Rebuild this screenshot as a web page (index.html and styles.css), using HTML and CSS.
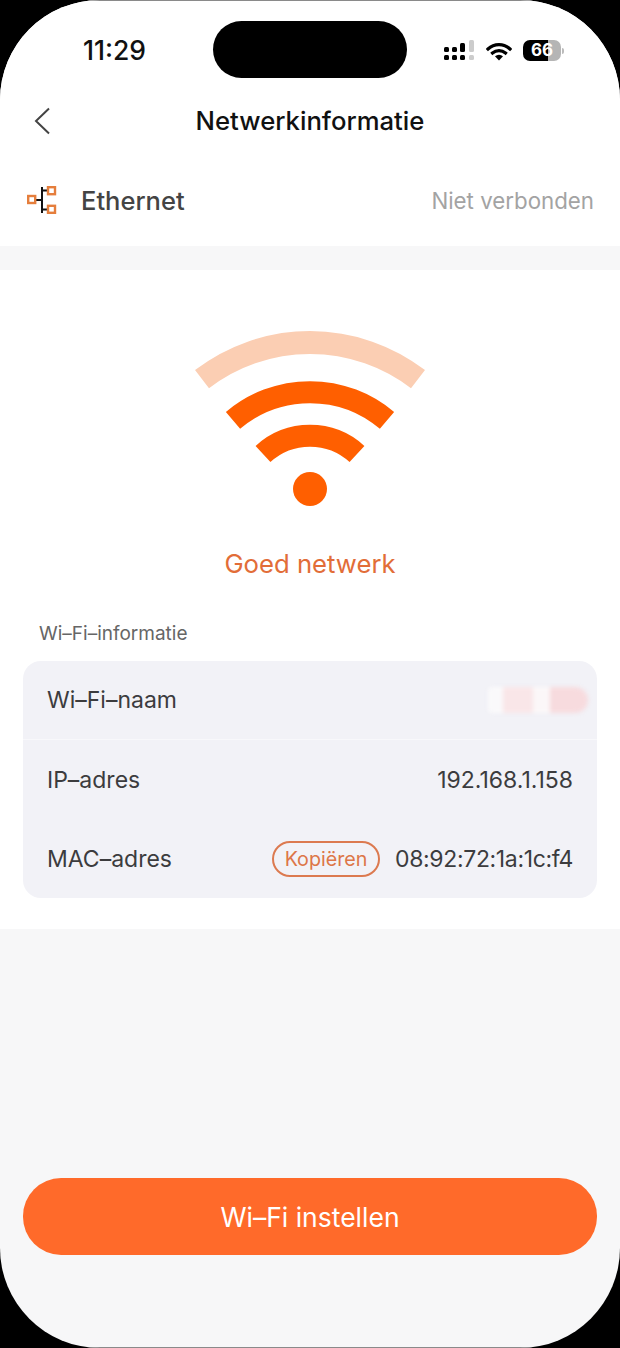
FILE: index.html
```html
<!DOCTYPE html>
<html lang="nl">
<head>
<meta charset="UTF-8">
<meta name="viewport" content="width=device-width, initial-scale=1.0">
<title>Netwerkinformatie</title>
<link rel="stylesheet" href="styles.css">
</head>
<body>
<div class="phone">
    <div class="top">
        <div class="status-bar">
            <div class="time">11:29</div>
            <div class="island"></div>
            <div class="status-icons">
                <svg class="signal" width="30" height="21" viewBox="0 0 30 21">
                    <rect x="0" y="7" width="5" height="5" rx="1.5" fill="#000"/>
                    <rect x="0" y="15" width="5" height="5" rx="1.5" fill="#000"/>
                    <rect x="8" y="7" width="5" height="5" rx="1.5" fill="#000"/>
                    <rect x="8" y="15" width="5" height="5" rx="1.5" fill="#000"/>
                    <rect x="16" y="3" width="5" height="9" rx="1.5" fill="#000"/>
                    <rect x="16" y="15" width="5" height="5" rx="1.5" fill="#000"/>
                    <rect x="25" y="0" width="5" height="12" rx="1.5" fill="#ccc"/>
                    <rect x="25" y="15" width="5" height="5" rx="1.5" fill="#ccc"/>
                </svg>
                <svg class="wifi-small" width="26" height="19" viewBox="0 0 26 19">
                    <path d="M2 7 A16 16 0 0 1 24 7" fill="none" stroke="#000" stroke-width="3.2" stroke-linecap="square"/>
                    <path d="M6.5 11 A10 10 0 0 1 19.5 11" fill="none" stroke="#000" stroke-width="3.2" stroke-linecap="square"/>
                    <path d="M9 14.2 A6 6 0 0 1 17 14.2 L13 18.6 Z" fill="#000"/>
                </svg>
                <div class="battery">
                    <div class="battery-body">66</div>
                    <div class="battery-nub"></div>
                </div>
            </div>
        </div>
        <div class="nav">
            <svg class="back" width="16" height="28" viewBox="0 0 16 28">
                <path d="M15 1.500 L2 14 L15 26.500" fill="none" stroke="#444" stroke-width="2"/>
            </svg>
            <div class="nav-title">Netwerkinformatie</div>
        </div>
    </div>

    <div class="ethernet">
        <svg class="ethernet-icon" width="30" height="28" viewBox="0 0 30 28">
            <path d="M8 14 H15 M15 1 V27 M15 4.500 H21 M15 23.500 H21" fill="none" stroke="#111" stroke-width="2"/>
            <rect x="1.200" y="10" width="7" height="7" fill="#fff" stroke="#e57e3c" stroke-width="2.400"/>
            <rect x="21" y="1.200" width="7" height="7" fill="#fff" stroke="#e57e3c" stroke-width="2.400"/>
            <rect x="21" y="19.800" width="7" height="7" fill="#fff" stroke="#e57e3c" stroke-width="2.400"/>
        </svg>
        <div class="ethernet-name">Ethernet</div>
        <div class="ethernet-state">Niet verbonden</div>
    </div>

    <div class="info">
        <svg class="wifi-big" width="240" height="190" viewBox="0 0 240 190">
            <path d="M12 54.200 A177.500 177.500 0 0 1 228 54.200" fill="none" stroke="#fbceb3" stroke-width="23"/>
            <path d="M43 95.400 A119 119 0 0 1 197 95.400" fill="none" stroke="#ff5f00" stroke-width="22"/>
            <path d="M73 129 A69.700 69.700 0 0 1 167 129" fill="none" stroke="#ff5f00" stroke-width="22"/>
            <circle cx="120" cy="164" r="17" fill="#ff5f00"/>
        </svg>
        <div class="quality">Goed netwerk</div>
        <div class="section-label">Wi–Fi–informatie</div>
        <div class="card">
            <div class="row row-line">
                <div class="row-name">Wi–Fi–naam</div>
                <div class="smudge"></div>
            </div>
            <div class="row">
                <div class="row-name">IP–adres</div>
                <div class="row-value">192.168.1.158</div>
            </div>
            <div class="row">
                <div class="row-name">MAC–adres</div>
                <div class="copy">Kopiëren</div>
                <div class="row-value mac">08:92:72:1a:1c:f4</div>
            </div>
        </div>
    </div>

    <div class="bottom">
        <button class="setup">Wi–Fi instellen</button>
    </div>
</div>
</body>
</html>
```

FILE: styles.css
```css
html, body {
    margin: 0;
    padding: 0;
    height: 100%;
    background-color: #000;
    overflow: hidden;
}

body {
    font-family: Inter, "Liberation Sans", sans-serif;
}

.phone {
    height: 1348px;
    width: 620px;
    display: flex;
    flex-direction: column;
    background-color: #f7f7f8;
    border-radius: 100px;
    overflow: hidden;
}

.top {
    height: 146px;
    box-sizing: border-box;
    border-top: 1px solid #8a8a8a;
    background-color: #fff;
}

.status-bar {
    height: 91px;
    position: relative;
    display: flex;
    align-items: flex-start;
}

.time {
    margin: 34px 0 0 83px;
    font-size: 26.5px;
    line-height: 30px;
    font-weight: 500;
    color: #111;
}

.island {
    position: absolute;
    left: 213px;
    top: 20px;
    width: 194px;
    height: 57px;
    background-color: #000;
    border-radius: 29px;
}

.status-icons {
    margin: 39px 0 0 auto;
    padding-right: 56px;
    display: flex;
    align-items: flex-start;
}

.wifi-small {
    margin: 2px 11px 0 12px;
}

.battery {
    display: flex;
    align-items: center;
}

.battery-body {
    width: 38px;
    height: 21px;
    border-radius: 7px;
    background: linear-gradient(to right, #000 66%, #b5b5b5 66%);
    color: #fff;
    font-size: 17px;
    line-height: 21px;
    font-weight: 700;
    text-align: center;
}

.battery-nub {
    width: 2px;
    height: 6px;
    margin-left: 1px;
    background-color: #bbb;
    border-radius: 0 2px 2px 0;
}

.nav {
    height: 54px;
    position: relative;
    display: flex;
    align-items: center;
    justify-content: center;
}

.back {
    position: absolute;
    left: 34px;
    top: 15px;
}

.nav-title {
    font-size: 25.7px;
    font-weight: 500;
    color: #111;
    margin-top: 2px;
}

.ethernet {
    height: 100px;
    box-sizing: border-box;
    margin-bottom: 24px;
    background-color: #fff;
    padding: 8px 26px 0;
    display: flex;
    align-items: center;
}

.ethernet-icon {
    margin: 0 24px 0 1px;
}

.ethernet-name {
    font-size: 25.5px;
    font-weight: 500;
    color: #444;
}

.ethernet-state {
    margin-left: auto;
    font-size: 22.300px;
    color: #a3a3a3;
}

.info {
    height: 659px;
    box-sizing: border-box;
    background-color: #fff;
    padding: 55px 23px 0;
    display: flex;
    flex-direction: column;
    align-items: center;
}

.quality {
    margin-top: 34px;
    font-size: 25.7px;
    line-height: 30px;
    color: #e26d38;
}

.section-label {
    align-self: flex-start;
    margin: 43px 0 0 16px;
    font-size: 19px;
    line-height: 24px;
    color: #666;
}

.card {
    align-self: stretch;
    margin-top: 15px;
    height: 237px;
    background-color: #f2f2f7;
    border-radius: 18px;
}

.row {
    height: 79px;
    box-sizing: border-box;
    padding: 0 24px;
    display: flex;
    align-items: center;
}

.row-line {
    border-bottom: 1px solid #f8f8fb;
}

.row-name {
    font-size: 23px;
    color: #3c3c3e;
    margin-right: auto;
}

.row-value {
    font-size: 23px;
    color: #3c3c3e;
}

.mac {
    letter-spacing: -0.35px;
}

.smudge {
    width: 100px;
    height: 26px;
    margin-right: -15px;
    border-radius: 4px 13px 13px 4px;
    background: linear-gradient(to right, #faf9fb 0 15%, #f9e6e8 15% 45%, #fbf7f8 45% 62%, #f7dbde 62%);
    filter: blur(2px);
}

.copy {
    box-sizing: border-box;
    width: 108px;
    height: 36px;
    margin-right: 15px;
    border: 2px solid #dc7a50;
    border-radius: 18px;
    font-size: 19.7px;
    line-height: 32px;
    text-align: center;
    color: #dd7648;
}

.bottom {
    flex: 1;
    box-sizing: border-box;
    border-bottom: 1px solid #8a8a8a;
    padding: 249px 23px 0;
}

.setup {
    display: block;
    width: 100%;
    height: 77px;
    border: none;
    border-radius: 38px;
    background-color: #ff6a2a;
    color: #fff;
    font-family: inherit;
    font-size: 26.5px;
    font-weight: 400;
}
```
